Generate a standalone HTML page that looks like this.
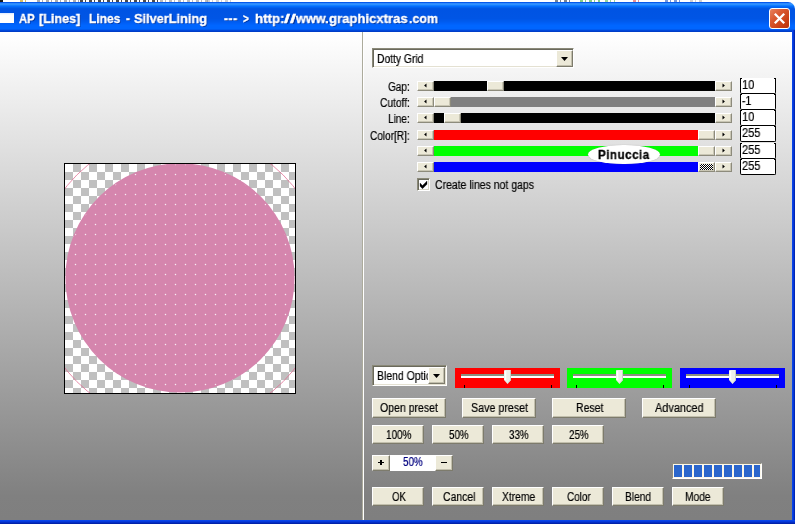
<!DOCTYPE html>
<html lang="en"><head><meta charset="utf-8"><title>AP [Lines] Lines - SilverLining</title><style>
html,body{margin:0;padding:0;background:#fff;overflow:hidden}
#w{position:relative;width:795px;height:524px;overflow:hidden;font-family:"Liberation Sans",sans-serif;font-size:12px;color:#000}
#w div,#w span.t{position:absolute}
.b{box-sizing:border-box;background:#ECE9D8;border:1px solid;border-color:#fff #7D7B6C #7D7B6C #fff;box-shadow:inset -1px -1px 0 #C2BFAD}
.sb{box-sizing:border-box;background:#ECE9D8;border:1px solid;border-color:#fff #8D8B7C #8D8B7C #fff;box-shadow:inset -1px -1px 0 #C9C6B4}
span.t{white-space:pre;line-height:1;transform-origin:0 0;display:block;will-change:transform}
</style></head><body><div id="w">
<div style="left:0px;top:0px;width:795px;height:3px;background:#fff"></div>
<div style="left:0px;top:0px;width:5px;height:2.2px;background:repeating-linear-gradient(to right,#000 0 3px,transparent 3px 5px,#000 5px 6px,transparent 6px 9px);opacity:0.9"></div>
<div style="left:20px;top:0px;width:8px;height:2.2px;background:repeating-linear-gradient(to right,#C8A020 0 3px,transparent 3px 5px,#C8A020 5px 6px,transparent 6px 9px);opacity:0.7"></div>
<div style="left:37px;top:0px;width:43px;height:2.2px;background:repeating-linear-gradient(to right,#444 0 3px,transparent 3px 5px,#444 5px 6px,transparent 6px 9px);opacity:0.45"></div>
<div style="left:80px;top:0px;width:80px;height:2.2px;background:repeating-linear-gradient(to right,#000 0 3px,transparent 3px 5px,#000 5px 6px,transparent 6px 9px);opacity:0.7"></div>
<div style="left:160px;top:0px;width:50px;height:2.2px;background:repeating-linear-gradient(to right,#666 0 3px,transparent 3px 5px,#666 5px 6px,transparent 6px 9px);opacity:0.45"></div>
<div style="left:207px;top:0px;width:24px;height:2.2px;background:repeating-linear-gradient(to right,#888 0 3px,transparent 3px 5px,#888 5px 6px,transparent 6px 9px);opacity:0.4"></div>
<div style="left:555px;top:0px;width:15px;height:2.2px;background:repeating-linear-gradient(to right,#234 0 3px,transparent 3px 5px,#234 5px 6px,transparent 6px 9px);opacity:0.6"></div>
<div style="left:580px;top:0px;width:20px;height:2.2px;background:repeating-linear-gradient(to right,#3a3 0 3px,transparent 3px 5px,#3a3 5px 6px,transparent 6px 9px);opacity:0.6"></div>
<div style="left:605px;top:0px;width:10px;height:2.2px;background:repeating-linear-gradient(to right,#3a3 0 3px,transparent 3px 5px,#3a3 5px 6px,transparent 6px 9px);opacity:0.5"></div>
<div style="left:633px;top:0px;width:6px;height:2.2px;background:repeating-linear-gradient(to right,#d44 0 3px,transparent 3px 5px,#d44 5px 6px,transparent 6px 9px);opacity:0.6"></div>
<div style="left:665px;top:0px;width:15px;height:2.2px;background:repeating-linear-gradient(to right,#25b 0 3px,transparent 3px 5px,#25b 5px 6px,transparent 6px 9px);opacity:0.6"></div>
<div style="left:690px;top:0px;width:12px;height:2.2px;background:repeating-linear-gradient(to right,#888 0 3px,transparent 3px 5px,#888 5px 6px,transparent 6px 9px);opacity:0.4"></div>
<div style="left:0px;top:2px;width:795px;height:30px;background:linear-gradient(to bottom,#0B5CEA 0px,#0058EE 0.8px,#3590FF 1.6px,#2C90FF 2.5px,#127DFF 3.5px,#036CFD 4.5px,#0262EE 5.5px,#0057E5 6.5px,#0054E3 7.5px,#0055E5 16.5px,#005BEE 19.5px,#0060F8 21.5px,#0066FF 23.5px,#0066FF 26.5px,#005BF0 27.5px,#0047DA 28.5px,#003DC8 29.5px);border-top-right-radius:7px"></div>
<div style="left:0px;top:12.5px;width:13.5px;height:10.5px;background:linear-gradient(to bottom,#DCE8FF 0,#fff 2px)"></div>
<span class="t" id="t0" style="left:18.90px;top:12.17px;font-size:13.5px;font-weight:bold;color:#fff;transform:scaleX(0.8366);text-shadow:1px 1px 0 rgba(0,20,90,.55);-webkit-text-stroke:.35px #fff;">AP</span>
<span class="t" id="t1" style="left:39.20px;top:12.17px;font-size:13.5px;font-weight:bold;color:#fff;transform:scaleX(0.9330);text-shadow:1px 1px 0 rgba(0,20,90,.55);-webkit-text-stroke:.35px #fff;">[Lines]</span>
<span class="t" id="t2" style="left:88.70px;top:12.17px;font-size:13.5px;font-weight:bold;color:#fff;transform:scaleX(0.8875);text-shadow:1px 1px 0 rgba(0,20,90,.55);-webkit-text-stroke:.35px #fff;">Lines</span>
<span class="t" id="t3" style="left:125.60px;top:12.17px;font-size:13.5px;font-weight:bold;color:#fff;transform:scaleX(0.8889);text-shadow:1px 1px 0 rgba(0,20,90,.55);-webkit-text-stroke:.35px #fff;">-</span>
<span class="t" id="t4" style="left:134.00px;top:12.17px;font-size:13.5px;font-weight:bold;color:#fff;transform:scaleX(0.9448);text-shadow:1px 1px 0 rgba(0,20,90,.55);-webkit-text-stroke:.35px #fff;">SilverLining</span>
<span class="t" id="t5" style="left:224.00px;top:12.17px;font-size:13.5px;font-weight:bold;color:#fff;transform:scaleX(0.8956);text-shadow:1px 1px 0 rgba(0,20,90,.55);-webkit-text-stroke:.35px #fff;letter-spacing:.6px;">---</span>
<span class="t" id="t6" style="left:243.40px;top:12.17px;font-size:13.5px;font-weight:bold;color:#fff;transform:scaleX(0.7350);text-shadow:1px 1px 0 rgba(0,20,90,.55);-webkit-text-stroke:.35px #fff;">&gt;</span>
<span class="t" id="t7" style="left:254.50px;top:12.17px;font-size:13.5px;font-weight:bold;color:#fff;transform:scaleX(0.9838);text-shadow:1px 1px 0 rgba(0,20,90,.55);-webkit-text-stroke:.35px #fff;">http:</span>
<span class="t" id="t8" style="left:284.40px;top:12.17px;font-size:13.5px;font-weight:bold;color:#fff;transform:scaleX(1.5967);text-shadow:1px 1px 0 rgba(0,20,90,.55);-webkit-text-stroke:.35px #fff;">//</span>
<span class="t" id="t9" style="left:296.30px;top:12.17px;font-size:13.5px;font-weight:bold;color:#fff;transform:scaleX(0.9406);text-shadow:1px 1px 0 rgba(0,20,90,.55);-webkit-text-stroke:.35px #fff;">www.</span>
<span class="t" id="t10" style="left:329.30px;top:12.17px;font-size:13.5px;font-weight:bold;color:#fff;transform:scaleX(0.9710);text-shadow:1px 1px 0 rgba(0,20,90,.55);-webkit-text-stroke:.35px #fff;">graphicxtras</span>
<span class="t" id="t11" style="left:408.80px;top:12.17px;font-size:13.5px;font-weight:bold;color:#fff;transform:scaleX(0.9202);text-shadow:1px 1px 0 rgba(0,20,90,.55);-webkit-text-stroke:.35px #fff;">.com</span>
<div style="left:769px;top:8px;width:21px;height:21px;box-sizing:border-box;border:1px solid #fff;border-radius:3px;background:linear-gradient(135deg,#E8825E 0%,#DA5A32 35%,#C93E14 75%,#B8320C 100%)"><svg width="19" height="19" viewBox="0 0 19 19" style="position:absolute;left:0;top:0"><path d="M4.8 4.8 L14.2 14.2 M14.2 4.8 L4.8 14.2" stroke="#fff" stroke-width="2.3" stroke-linecap="butt" fill="none"/></svg></div>
<div style="left:0px;top:32px;width:792px;height:488px;background:linear-gradient(to bottom,#FFFFFF 0,#FFFFFF 2px,#808080 464px,#7F7F7F 100%)"></div>
<div style="left:792px;top:30px;width:3px;height:494px;background:linear-gradient(to right,#0A4CF0,#0436D8 50%,#001EA0)"></div>
<div style="left:0px;top:520px;width:795px;height:4px;background:linear-gradient(to bottom,#0A4CF0,#0436D8 45%,#001C9C)"></div>
<div style="left:362px;top:32px;width:1px;height:488px;background:#ACAB9C"></div>
<div style="left:363px;top:32px;width:1px;height:488px;background:#fff"></div>
<div style="left:64px;top:163px;width:232px;height:231px;box-sizing:border-box;border:1px solid #000;overflow:hidden;background-color:#fff;background-image:conic-gradient(#C0C0C0 25%,#fff 0 50%,#C0C0C0 0 75%,#fff 0);background-size:16px 16px;background-position:0 0"><svg width="230" height="229" viewBox="65 164 230 229" style="position:absolute;left:0;top:0"><defs><pattern id="dots" x="74" y="163" width="10" height="10" patternUnits="userSpaceOnUse"><rect x="0" y="1" width="3" height="1" fill="#fff" fill-opacity=".12"/><rect x="1" y="0" width="1" height="3" fill="#fff" fill-opacity=".12"/><rect x="1" y="1" width="1" height="1" fill="#fff" fill-opacity=".82"/></pattern><clipPath id="cc"><circle cx="180" cy="277.9" r="113.5"/></clipPath></defs><circle cx="180" cy="278.3" r="146" fill="none" stroke="#E0698F" stroke-width=".9" stroke-opacity=".85"/><circle cx="180" cy="277.9" r="114.6" fill="#D585AD"/><rect x="65" y="164" width="230" height="229" fill="url(#dots)" clip-path="url(#cc)"/></svg></div>
<div style="left:372px;top:48px;width:202px;height:20px;box-sizing:border-box;background:#fff;border:1px solid;border-color:#8A8978 #fff #fff #8A8978;box-shadow:inset 1px 1px 0 #6A695C, inset -1px -1px 0 #E4E1D2"></div><div class="b" style="left:556px;top:50px;width:17px;height:17px"></div><svg style="position:absolute;left:556px;top:50px" width="17" height="17"><path d="M5.0 7.0 h7 l-3.5 4 z" fill="#000"/></svg>
<span class="t" id="t12" style="left:376.60px;top:52.84px;font-size:12px;font-weight:normal;color:#000;transform:scaleX(0.8590);-webkit-text-stroke:.2px #000;">Dotty Grid</span>
<div style="left:434px;top:81px;width:281px;height:10px;background:#000"></div>
<div class="sb" style="left:417px;top:81px;width:17px;height:10px"></div>
<svg style="position:absolute;left:417px;top:81px" width="17" height="10"><path d="M9.5 2.6 v3.8 l-2.4 -1.9 z" fill="#000"/></svg>
<div class="sb" style="left:715px;top:81px;width:17px;height:10px"></div>
<svg style="position:absolute;left:715px;top:81px" width="17" height="10"><path d="M7.5 2.6 v3.8 l2.4 -1.9 z" fill="#000"/></svg>
<div class="sb" style="left:487px;top:81px;width:17px;height:10px"></div>
<span class="t" id="t13" style="left:387.70px;top:80.84px;font-size:12px;font-weight:normal;color:#000;transform:scaleX(0.8341);-webkit-text-stroke:.2px #000;">Gap:</span>
<div style="left:740px;top:78px;width:36px;height:16px;box-sizing:border-box;border:1px solid #000;border-top:0;background:#fff;border-radius:0 0 2px 2px"></div>
<div style="left:740px;top:78px;width:2px;height:1px;background:#000"></div>
<div style="left:774px;top:78px;width:2px;height:1px;background:#000"></div>
<span class="t" id="t14" style="left:742.30px;top:78.84px;font-size:12px;font-weight:normal;color:#000;transform:scaleX(0.9207);-webkit-text-stroke:.2px #000;">10</span>
<div style="left:434px;top:97px;width:281px;height:10px;background:#808080"></div>
<div class="sb" style="left:417px;top:97px;width:17px;height:10px"></div>
<svg style="position:absolute;left:417px;top:97px" width="17" height="10"><path d="M9.5 2.6 v3.8 l-2.4 -1.9 z" fill="#000"/></svg>
<div class="sb" style="left:715px;top:97px;width:17px;height:10px"></div>
<svg style="position:absolute;left:715px;top:97px" width="17" height="10"><path d="M7.5 2.6 v3.8 l2.4 -1.9 z" fill="#000"/></svg>
<div class="sb" style="left:434px;top:97px;width:17px;height:10px"></div>
<span class="t" id="t15" style="left:379.50px;top:96.84px;font-size:12px;font-weight:normal;color:#000;transform:scaleX(0.8509);-webkit-text-stroke:.2px #000;">Cutoff:</span>
<div style="left:740px;top:94px;width:36px;height:16px;box-sizing:border-box;border:1px solid #000;border-top:0;background:#fff;border-radius:0 0 2px 2px"></div>
<div style="left:740px;top:94px;width:2px;height:1px;background:#000"></div>
<div style="left:774px;top:94px;width:2px;height:1px;background:#000"></div>
<span class="t" id="t16" style="left:742.30px;top:94.84px;font-size:12px;font-weight:normal;color:#000;transform:scaleX(0.8621);-webkit-text-stroke:.2px #000;">-1</span>
<div style="left:434px;top:113px;width:281px;height:10px;background:#000"></div>
<div class="sb" style="left:417px;top:113px;width:17px;height:10px"></div>
<svg style="position:absolute;left:417px;top:113px" width="17" height="10"><path d="M9.5 2.6 v3.8 l-2.4 -1.9 z" fill="#000"/></svg>
<div class="sb" style="left:715px;top:113px;width:17px;height:10px"></div>
<svg style="position:absolute;left:715px;top:113px" width="17" height="10"><path d="M7.5 2.6 v3.8 l2.4 -1.9 z" fill="#000"/></svg>
<div class="sb" style="left:444px;top:113px;width:17px;height:10px"></div>
<span class="t" id="t17" style="left:387.70px;top:112.84px;font-size:12px;font-weight:normal;color:#000;transform:scaleX(0.8336);-webkit-text-stroke:.2px #000;">Line:</span>
<div style="left:740px;top:110px;width:36px;height:16px;box-sizing:border-box;border:1px solid #000;border-top:0;background:#fff;border-radius:0 0 2px 2px"></div>
<div style="left:740px;top:110px;width:2px;height:1px;background:#000"></div>
<div style="left:774px;top:110px;width:2px;height:1px;background:#000"></div>
<span class="t" id="t18" style="left:742.30px;top:110.84px;font-size:12px;font-weight:normal;color:#000;transform:scaleX(0.9207);-webkit-text-stroke:.2px #000;">10</span>
<div style="left:434px;top:130px;width:281px;height:10px;background:#FF0000"></div>
<div class="sb" style="left:417px;top:130px;width:17px;height:10px"></div>
<svg style="position:absolute;left:417px;top:130px" width="17" height="10"><path d="M9.5 2.6 v3.8 l-2.4 -1.9 z" fill="#000"/></svg>
<div class="sb" style="left:715px;top:130px;width:17px;height:10px"></div>
<svg style="position:absolute;left:715px;top:130px" width="17" height="10"><path d="M7.5 2.6 v3.8 l2.4 -1.9 z" fill="#000"/></svg>
<div class="sb" style="left:698px;top:130px;width:17px;height:10px"></div>
<span class="t" id="t19" style="left:369.80px;top:129.84px;font-size:12px;font-weight:normal;color:#000;transform:scaleX(0.8364);-webkit-text-stroke:.2px #000;">Color[R]:</span>
<div style="left:740px;top:126px;width:36px;height:16px;box-sizing:border-box;border:1px solid #000;border-top:0;background:#fff;border-radius:0 0 2px 2px"></div>
<div style="left:740px;top:126px;width:2px;height:1px;background:#000"></div>
<div style="left:774px;top:126px;width:2px;height:1px;background:#000"></div>
<span class="t" id="t20" style="left:742.30px;top:126.84px;font-size:12px;font-weight:normal;color:#000;transform:scaleX(0.9186);-webkit-text-stroke:.2px #000;">255</span>
<div style="left:434px;top:146px;width:281px;height:10px;background:#00FF00"></div>
<div class="sb" style="left:417px;top:146px;width:17px;height:10px"></div>
<svg style="position:absolute;left:417px;top:146px" width="17" height="10"><path d="M9.5 2.6 v3.8 l-2.4 -1.9 z" fill="#000"/></svg>
<div class="sb" style="left:715px;top:146px;width:17px;height:10px"></div>
<svg style="position:absolute;left:715px;top:146px" width="17" height="10"><path d="M7.5 2.6 v3.8 l2.4 -1.9 z" fill="#000"/></svg>
<div class="sb" style="left:698px;top:146px;width:17px;height:10px"></div>
<div style="left:740px;top:143px;width:36px;height:16px;box-sizing:border-box;border:1px solid #000;border-top:0;background:#fff;border-radius:0 0 2px 2px"></div>
<div style="left:740px;top:143px;width:2px;height:1px;background:#000"></div>
<div style="left:774px;top:143px;width:2px;height:1px;background:#000"></div>
<span class="t" id="t21" style="left:742.30px;top:143.84px;font-size:12px;font-weight:normal;color:#000;transform:scaleX(0.9186);-webkit-text-stroke:.2px #000;">255</span>
<div style="left:434px;top:162px;width:281px;height:10px;background:#0000FF"></div>
<div class="sb" style="left:417px;top:162px;width:17px;height:10px"></div>
<svg style="position:absolute;left:417px;top:162px" width="17" height="10"><path d="M9.5 2.6 v3.8 l-2.4 -1.9 z" fill="#000"/></svg>
<div class="sb" style="left:715px;top:162px;width:17px;height:10px"></div>
<svg style="position:absolute;left:715px;top:162px" width="17" height="10"><path d="M7.5 2.6 v3.8 l2.4 -1.9 z" fill="#000"/></svg>
<div class="sb" style="left:698px;top:162px;width:17px;height:10px"></div>
<div style="left:700px;top:164px;width:13px;height:6px;background-color:#fff;background-image:conic-gradient(#000 25%,#fff 0 50%,#000 0 75%,#fff 0);background-size:2px 2px"></div>
<div style="left:740px;top:159px;width:36px;height:16px;box-sizing:border-box;border:1px solid #000;border-top:0;background:#fff;border-radius:0 0 2px 2px"></div>
<div style="left:740px;top:159px;width:2px;height:1px;background:#000"></div>
<div style="left:774px;top:159px;width:2px;height:1px;background:#000"></div>
<span class="t" id="t22" style="left:742.30px;top:159.84px;font-size:12px;font-weight:normal;color:#000;transform:scaleX(0.9186);-webkit-text-stroke:.2px #000;">255</span>
<div style="left:588.2px;top:145.3px;width:71.4px;height:19.2px;background:#fff;border-radius:50%;box-shadow:0 0 1px rgba(120,120,120,.6)"></div>
<span class="t" id="t23" style="left:598.00px;top:148.84px;font-size:12px;font-weight:bold;color:#000;transform:scaleX(0.9670);letter-spacing:.5px;-webkit-text-stroke:.3px #000;">Pinuccia</span>
<div style="left:417px;top:178px;width:13px;height:13px;box-sizing:border-box;background:#fff;border:1px solid;border-color:#8A8978 #fff #fff #8A8978;box-shadow:inset 1px 1px 0 #6A695C, inset -1px -1px 0 #D8D5C4"><svg width="11" height="11" style="position:absolute;left:0;top:0"><path d="M2 4 L4.5 6.5 L9 2 V5.2 L4.5 9.7 L2 7.2 Z" fill="#000" stroke="#000" stroke-width=".3"/></svg></div>
<span class="t" id="t24" style="left:435.20px;top:178.84px;font-size:12px;font-weight:normal;color:#000;transform:scaleX(0.8721);-webkit-text-stroke:.2px #000;">Create lines not gaps</span>
<div style="left:372px;top:365px;width:75px;height:21px;box-sizing:border-box;background:#fff;border:1px solid;border-color:#8A8978 #fff #fff #8A8978;box-shadow:inset 1px 1px 0 #6A695C, inset -1px -1px 0 #E4E1D2"></div><div class="b" style="left:428px;top:367px;width:17px;height:17px"></div><svg style="position:absolute;left:428px;top:367px" width="17" height="17"><path d="M5.0 7.0 h7 l-3.5 4 z" fill="#000"/></svg>
<div style="left:376px;top:367px;width:52px;height:17px;overflow:hidden"><span class="t" id="t25" style="left:0.60px;top:2.84px;font-size:12px;font-weight:normal;color:#000;transform:scaleX(0.8719);-webkit-text-stroke:.2px #000;">Blend Option</span></div>
<div style="left:455px;top:368px;width:105px;height:20px;background:#FF0000"></div>
<div style="left:461px;top:374px;width:93px;height:2px;background:#8C8F80"></div>
<div style="left:461px;top:376px;width:93px;height:2px;background:#fff"></div>
<div style="left:464px;top:385px;width:1px;height:3px;background:#000"></div>
<div style="left:550.5px;top:385px;width:1px;height:3px;background:#000"></div>
<svg style="position:absolute;left:504px;top:370px" width="7" height="14"><path d="M0 .8 Q0 0 .8 0 H6.2 Q7 0 7 .8 V10 L3.5 14 L0 10 Z" fill="#EDEFEA"/><path d="M1.5 1 V10" stroke="#fff" stroke-width="1.5"/><path d="M6.5 1 V10 L3.5 13.5" stroke="#C9CFC6" stroke-width="1" fill="none"/></svg>
<div style="left:567px;top:368px;width:105px;height:20px;background:#00FF00"></div>
<div style="left:573px;top:374px;width:93px;height:2px;background:#8C8F80"></div>
<div style="left:573px;top:376px;width:93px;height:2px;background:#fff"></div>
<div style="left:576px;top:385px;width:1px;height:3px;background:#000"></div>
<div style="left:662.5px;top:385px;width:1px;height:3px;background:#000"></div>
<svg style="position:absolute;left:616px;top:370px" width="7" height="14"><path d="M0 .8 Q0 0 .8 0 H6.2 Q7 0 7 .8 V10 L3.5 14 L0 10 Z" fill="#EDEFEA"/><path d="M1.5 1 V10" stroke="#fff" stroke-width="1.5"/><path d="M6.5 1 V10 L3.5 13.5" stroke="#C9CFC6" stroke-width="1" fill="none"/></svg>
<div style="left:680px;top:368px;width:105px;height:20px;background:#0000FF"></div>
<div style="left:686px;top:374px;width:93px;height:2px;background:#8C8F80"></div>
<div style="left:686px;top:376px;width:93px;height:2px;background:#fff"></div>
<div style="left:689px;top:385px;width:1px;height:3px;background:#000"></div>
<div style="left:775.5px;top:385px;width:1px;height:3px;background:#000"></div>
<svg style="position:absolute;left:729px;top:370px" width="7" height="14"><path d="M0 .8 Q0 0 .8 0 H6.2 Q7 0 7 .8 V10 L3.5 14 L0 10 Z" fill="#EDEFEA"/><path d="M1.5 1 V10" stroke="#fff" stroke-width="1.5"/><path d="M6.5 1 V10 L3.5 13.5" stroke="#C9CFC6" stroke-width="1" fill="none"/></svg>
<div class="b" style="left:372px;top:398px;width:74px;height:20px"></div>
<span class="t" id="t26" style="left:380.30px;top:401.84px;font-size:12px;font-weight:normal;color:#000;transform:scaleX(0.8767);-webkit-text-stroke:.2px #000;">Open preset</span>
<div class="b" style="left:462px;top:398px;width:74px;height:20px"></div>
<span class="t" id="t27" style="left:471.40px;top:401.84px;font-size:12px;font-weight:normal;color:#000;transform:scaleX(0.8915);-webkit-text-stroke:.2px #000;">Save preset</span>
<div class="b" style="left:552px;top:398px;width:74px;height:20px"></div>
<span class="t" id="t28" style="left:575.80px;top:401.84px;font-size:12px;font-weight:normal;color:#000;transform:scaleX(0.8769);-webkit-text-stroke:.2px #000;">Reset</span>
<div class="b" style="left:642px;top:398px;width:74px;height:20px"></div>
<span class="t" id="t29" style="left:655.10px;top:401.84px;font-size:12px;font-weight:normal;color:#000;transform:scaleX(0.9105);-webkit-text-stroke:.2px #000;">Advanced</span>
<div class="b" style="left:372px;top:425px;width:52px;height:19px"></div>
<span class="t" id="t30" style="left:386.10px;top:428.84px;font-size:12px;font-weight:normal;color:#000;transform:scaleX(0.8273);-webkit-text-stroke:.2px #000;">100%</span>
<div class="b" style="left:432px;top:425px;width:52px;height:19px"></div>
<span class="t" id="t31" style="left:448.80px;top:428.84px;font-size:12px;font-weight:normal;color:#000;transform:scaleX(0.8156);-webkit-text-stroke:.2px #000;">50%</span>
<div class="b" style="left:492px;top:425px;width:52px;height:19px"></div>
<span class="t" id="t32" style="left:508.70px;top:428.84px;font-size:12px;font-weight:normal;color:#000;transform:scaleX(0.8156);-webkit-text-stroke:.2px #000;">33%</span>
<div class="b" style="left:552px;top:425px;width:52px;height:19px"></div>
<span class="t" id="t33" style="left:568.60px;top:428.84px;font-size:12px;font-weight:normal;color:#000;transform:scaleX(0.8156);-webkit-text-stroke:.2px #000;">25%</span>
<div style="left:389px;top:455px;width:47px;height:16px;background:#fff"></div>
<div class="b" style="left:372px;top:455px;width:18px;height:16px"></div>
<div class="b" style="left:435px;top:455px;width:18px;height:16px"></div>
<span class="t" id="t34" style="left:402.70px;top:455.84px;font-size:12px;font-weight:normal;color:#000080;transform:scaleX(0.8198);-webkit-text-stroke:.2px #000080;">50%</span>
<div style="left:378px;top:462px;width:6px;height:1.3px;background:#000"></div>
<div style="left:380px;top:460px;width:2px;height:5px;background:#000"></div>
<div style="left:441px;top:462px;width:6px;height:1.2px;background:#000"></div>
<div class="b" style="left:372px;top:487px;width:52px;height:19px"></div>
<span class="t" id="t35" style="left:391.90px;top:490.84px;font-size:12px;font-weight:normal;color:#000;transform:scaleX(0.8014);-webkit-text-stroke:.2px #000;">OK</span>
<div class="b" style="left:432px;top:487px;width:52px;height:19px"></div>
<span class="t" id="t36" style="left:442.70px;top:490.84px;font-size:12px;font-weight:normal;color:#000;transform:scaleX(0.8699);-webkit-text-stroke:.2px #000;">Cancel</span>
<div class="b" style="left:492px;top:487px;width:52px;height:19px"></div>
<span class="t" id="t37" style="left:501.90px;top:490.84px;font-size:12px;font-weight:normal;color:#000;transform:scaleX(0.8582);-webkit-text-stroke:.2px #000;">Xtreme</span>
<div class="b" style="left:552px;top:487px;width:52px;height:19px"></div>
<span class="t" id="t38" style="left:566.50px;top:490.84px;font-size:12px;font-weight:normal;color:#000;transform:scaleX(0.8261);-webkit-text-stroke:.2px #000;">Color</span>
<div class="b" style="left:612px;top:487px;width:52px;height:19px"></div>
<span class="t" id="t39" style="left:624.95px;top:490.84px;font-size:12px;font-weight:normal;color:#000;transform:scaleX(0.8499);-webkit-text-stroke:.2px #000;">Blend</span>
<div class="b" style="left:672px;top:487px;width:52px;height:19px"></div>
<span class="t" id="t40" style="left:685.24px;top:490.84px;font-size:12px;font-weight:normal;color:#000;transform:scaleX(0.8500);-webkit-text-stroke:.2px #000;">Mode</span>
<div style="left:672px;top:463px;width:90px;height:16px;box-sizing:border-box;border:1px solid;border-color:#8F8E80 #fff #fff #8F8E80;background:#FBF7EA"></div>
<div style="left:674px;top:465px;width:8px;height:12px;background:#2A66CC"></div>
<div style="left:684px;top:465px;width:8px;height:12px;background:#2A66CC"></div>
<div style="left:694px;top:465px;width:8px;height:12px;background:#2A66CC"></div>
<div style="left:704px;top:465px;width:8px;height:12px;background:#2A66CC"></div>
<div style="left:714px;top:465px;width:8px;height:12px;background:#2A66CC"></div>
<div style="left:724px;top:465px;width:8px;height:12px;background:#2A66CC"></div>
<div style="left:734px;top:465px;width:8px;height:12px;background:#2A66CC"></div>
<div style="left:744px;top:465px;width:8px;height:12px;background:#2A66CC"></div>
<div style="left:754px;top:465px;width:6px;height:12px;background:#2A66CC"></div>
</div></body></html>
